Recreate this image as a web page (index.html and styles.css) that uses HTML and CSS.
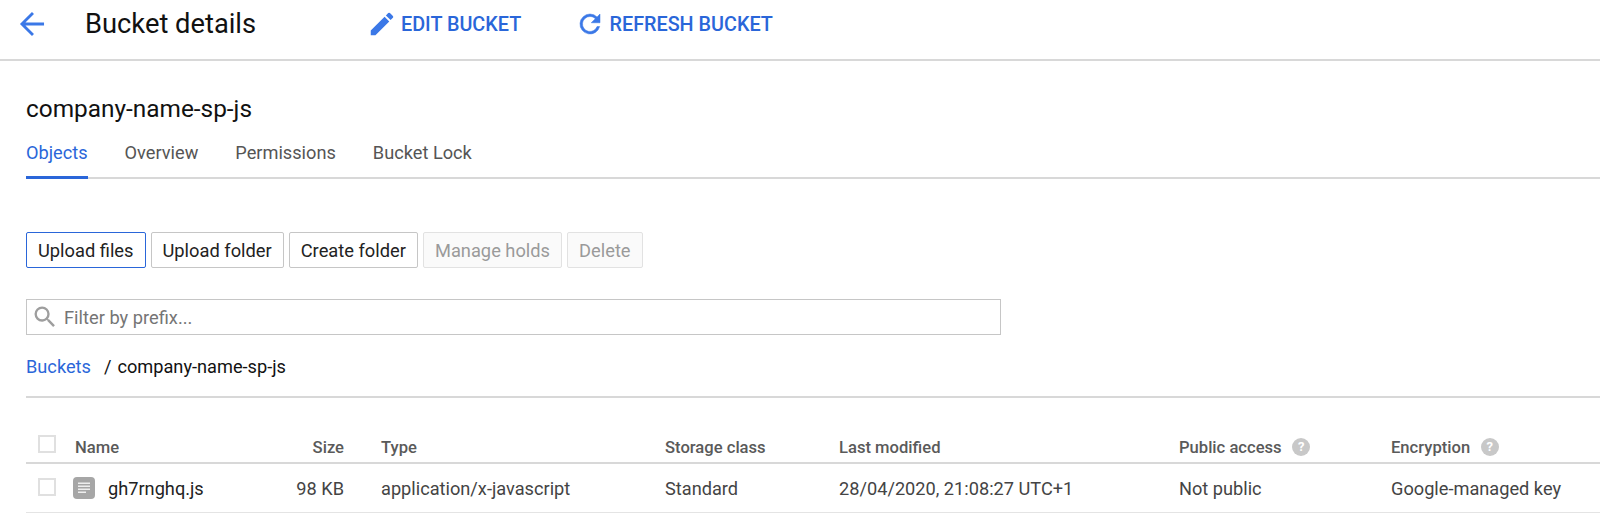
FILE: index.html
```html
<!DOCTYPE html>
<html lang="en">
<head>
  <meta charset="UTF-8" />
  <title>Bucket details</title>
  <link rel="stylesheet" href="styles.css">
</head>
<body>
  <header class="topbar">
    <svg class="back-icon" viewBox="0 0 24 24"><path d="M20.5 12H5M12.7 4.2 4.9 12l7.8 7.8"/></svg>
    <h1>Bucket details</h1>
    <a class="action action-edit">
      <svg viewBox="0 0 24 24"><path d="M3 17.25V21h3.75L17.81 9.94l-3.75-3.75L3 17.25zM20.71 7.04a1 1 0 0 0 0-1.41l-2.34-2.34a1 1 0 0 0-1.41 0l-1.83 1.83 3.75 3.75 1.83-1.83z"/></svg>
      EDIT BUCKET
    </a>
    <a class="action action-refresh">
      <svg viewBox="0 0 24 24"><path d="M17.65 6.35A7.96 7.96 0 0 0 12 4a8 8 0 1 0 7.73 10h-2.08A6 6 0 1 1 12 6c1.66 0 3.14.69 4.22 1.78L13 11h7V4l-2.35 2.35z"/></svg>
      REFRESH BUCKET
    </a>
  </header>

  <main class="content">
    <h2>company-name-sp-js</h2>
    <nav class="tabs">
      <a class="tab active">Objects</a>
      <a class="tab">Overview</a>
      <a class="tab">Permissions</a>
      <a class="tab">Bucket Lock</a>
    </nav>

    <div class="buttons">
      <button class="btn primary">Upload files</button>
      <button class="btn">Upload folder</button>
      <button class="btn">Create folder</button>
      <button class="btn disabled">Manage holds</button>
      <button class="btn disabled">Delete</button>
    </div>

    <div class="filter">
      <svg viewBox="0 0 24 24"><path d="M15.5 14h-.79l-.28-.27A6.47 6.47 0 0 0 16 9.5 6.5 6.5 0 1 0 9.5 16c1.61 0 3.09-.59 4.23-1.57l.27.28v.79l5 4.99L20.49 19l-4.99-5zm-6 0a4.5 4.5 0 1 1 0-9 4.5 4.5 0 0 1 0 9z"/></svg>
      <span>Filter by prefix...</span>
    </div>

    <div class="crumbs"><a>Buckets</a><span class="sep">/</span><span>company-name-sp-js</span></div>

    <div class="row head">
      <span class="check"></span>
      <span class="col-name">Name</span>
      <span class="col-size">Size</span>
      <span class="col-type">Type</span>
      <span>Storage class</span>
      <span>Last modified</span>
      <span class="col-help">Public access <i class="help">?</i></span>
      <span class="col-help">Encryption <i class="help">?</i></span>
    </div>
    <div class="row body">
      <span class="check"></span>
      <span class="col-name">
        <svg class="file-icon" viewBox="0 0 22 22"><rect width="22" height="22" rx="4" fill="#a6a6a6"/><path d="M5 5.5h12V7H5zM5 8.5h12V10H5zM5 11.5h12V13H5zM5 14.5h8V16H5z" fill="#eee"/></svg>
        gh7rnghq.js
      </span>
      <span class="col-size">98 KB</span>
      <span class="col-type">application/x-javascript</span>
      <span>Standard</span>
      <span>28/04/2020, 21:08:27 UTC+1</span>
      <span>Not public</span>
      <span>Google-managed key</span>
    </div>
  </main>
</body>
</html>
```

FILE: styles.css
```css
body {
  margin: 0;
  font-family: Roboto, sans-serif;
  color: #111;
  background: #fff;
  overflow: hidden;
}
.topbar {
  display: flex;
  align-items: center;
  height: 48px;
  padding-bottom: 11px;
  border-bottom: 2px solid #d8d8d8;
}
.back-icon {
  width: 34px;
  height: 34px;
  margin-left: 15px;
  fill: none;
  stroke: #3b78e7;
  stroke-width: 2;
}
h1 {
  margin: 0 0 0 36px;
  width: 281.5px;
  font-size: 27.3px;
  font-weight: 400;
}
.action {
  display: flex;
  align-items: center;
  gap: 4.5px;
  font-size: 19.8px;
  font-weight: 500;
  color: #2a66d9;
}
.action svg {
  width: 30px;
  height: 30px;
  fill: #3b78e7;
}
.action-edit {
  width: 208.5px;
}
.action-refresh svg {
  stroke: #3b78e7;
  stroke-width: 0.4;
}
h2 {
  margin: 0;
  padding-top: 34px;
  font-size: 24.4px;
  line-height: 28px;
  font-weight: 400;
}
.content {
  padding-left: 26px;
}
.tabs {
  display: flex;
  gap: 37px;
  height: 42px;
  margin-top: 12px;
  border-bottom: 2px solid #d8d8d8;
  font-size: 18.2px;
  color: #555;
}
.tab {
  height: 42px;
  line-height: 36px;
  box-sizing: border-box;
}
.tab.active {
  color: #2a66d9;
  border-bottom: 3px solid #2a66d9;
  height: 44px;
}
.buttons {
  display: flex;
  gap: 5px;
  margin-top: 53px;
}
.btn {
  height: 36px;
  padding: 0 11px;
  border: 1px solid #c6c6c6;
  border-radius: 2px;
  background: #fff;
  font: 18.3px Roboto, sans-serif;
  color: #222;
}
.btn.primary {
  border-color: #2a66d9;
}
.btn.disabled {
  border-color: #e2e2e2;
  background: #fafafa;
  color: #9a9a9a;
}
.filter {
  display: flex;
  align-items: center;
  gap: 5px;
  box-sizing: border-box;
  width: 975px;
  height: 36px;
  margin-top: 31px;
  padding-left: 4px;
  border: 1px solid #c6c6c6;
  font-size: 18.3px;
  color: #757575;
}
.filter svg {
  width: 28px;
  height: 28px;
  fill: #9e9e9e;
}
.crumbs {
  margin-top: 22px;
  padding-bottom: 19px;
  border-bottom: 2px solid #d8d8d8;
  font-size: 18.2px;
  line-height: 20px;
}
.crumbs a {
  color: #2a66d9;
}
.sep {
  margin: 0 6px 0 13px;
}
.row {
  display: grid;
  grid-template-columns: 49px 201px 68px 321px 174px 340px 212px 1fr;
  align-items: center;
  font-size: 18.2px;
}
.head {
  height: 66px;
  padding-top: 34px;
  box-sizing: border-box;
  border-bottom: 2px solid #d8d8d8;
  font-weight: 500;
  font-size: 16.6px;
  color: #5a5a5a;
}
.head .check {
  margin-bottom: 6px;
}
.body {
  height: 48px;
  border-bottom: 1px solid #e4e4e4;
  color: #444;
}
.body .check {
  margin-bottom: 3px;
}
.check {
  box-sizing: border-box;
  width: 18px;
  height: 18px;
  margin-left: 12px;
  border: 2px solid #e0e0e0;
}
.col-name {
  display: flex;
  align-items: center;
  gap: 13px;
  color: #222;
}
.head .col-name {
  color: #5a5a5a;
}
.col-size {
  text-align: right;
}
.col-type {
  padding-left: 37px;
}
.col-help {
  display: flex;
  align-items: center;
}
.file-icon {
  width: 22px;
  height: 22px;
  margin-left: -2px;
}
.help {
  width: 18px;
  height: 18px;
  margin-left: 10.5px;
  border-radius: 50%;
  background: #c8c8c8;
  color: #fff;
  font-size: 13px;
  font-style: normal;
  line-height: 18px;
  text-align: center;
  font-weight: 700;
}
```
